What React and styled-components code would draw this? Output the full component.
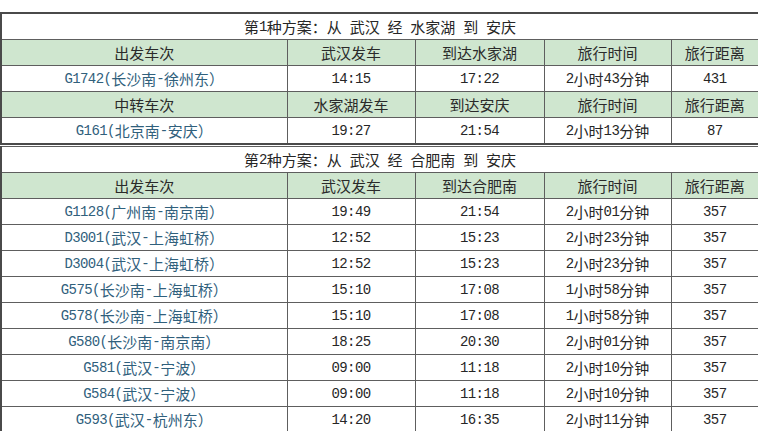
import React from "react";
import styled, { createGlobalStyle } from "styled-components";

const Global = createGlobalStyle`
  html, body { margin: 0; padding: 0; background: #fff; }
  body {
    font-family: "Noto Sans CJK SC", "Liberation Sans", sans-serif;
    overflow: hidden;
  }
`;

const Page = styled.div`
  padding-top: 12px;
  width: 758px;
  display: flex;
  flex-direction: column;
  gap: 0;
`;

const Table = styled.table`
  width: 758px;
  border-collapse: collapse;
  table-layout: fixed;
  border: 2px solid #4a4a4a;
  font-size: 15px;
  color: #262626;
  & + & {
    border-top: 1px solid #4a4a4a;
    margin-top: 1px;
  }
`;

const Row = styled.tr`
  height: 26px;
`;

const Cell = styled.td`
  border: 1px solid #5e5e5e;
  padding: 0;
  height: 25px;
  background: ${(p) => (p.$head ? "#cfe6cf" : "#fff")};
  color: ${(p) => (p.$train ? "#30607c" : p.$head ? "#2a2a2a" : "#262626")};
`;

const Inner = styled.div`
  height: 25px;
  display: flex;
  align-items: center;
  justify-content: center;
  white-space: pre;
  overflow: hidden;
  line-height: 18px;
`;

const Latin = styled.span`
  font-family: "Liberation Mono", monospace;
  font-size: 14px;
  letter-spacing: -0.6px;
  line-height: 18px;
`;

const fmt = (s) =>
  s.split(/([\x20-\x7e]+)/).map((p, i) =>
    /^[\x20-\x7e]+$/.test(p) ? <Latin key={i}>{p}</Latin> : p
  );

const widths = [286, 128, 129, 127, 88];

const plans = [
  {
    title: "第1种方案：从 武汉 经 水家湖 到 安庆",
    groups: [
      {
        head: ["出发车次", "武汉发车", "到达水家湖", "旅行时间", "旅行距离"],
        rows: [["G1742(长沙南-徐州东）", "14:15", "17:22", "2小时43分钟", "431"]],
      },
      {
        head: ["中转车次", "水家湖发车", "到达安庆", "旅行时间", "旅行距离"],
        rows: [["G161(北京南-安庆）", "19:27", "21:54", "2小时13分钟", "87"]],
      },
    ],
  },
  {
    title: "第2种方案：从 武汉 经 合肥南 到 安庆",
    groups: [
      {
        head: ["出发车次", "武汉发车", "到达合肥南", "旅行时间", "旅行距离"],
        rows: [
          ["G1128(广州南-南京南）", "19:49", "21:54", "2小时01分钟", "357"],
          ["D3001(武汉-上海虹桥）", "12:52", "15:23", "2小时23分钟", "357"],
          ["D3004(武汉-上海虹桥）", "12:52", "15:23", "2小时23分钟", "357"],
          ["G575(长沙南-上海虹桥）", "15:10", "17:08", "1小时58分钟", "357"],
          ["G578(长沙南-上海虹桥）", "15:10", "17:08", "1小时58分钟", "357"],
          ["G580(长沙南-南京南）", "18:25", "20:30", "2小时01分钟", "357"],
          ["G581(武汉-宁波）", "09:00", "11:18", "2小时10分钟", "357"],
          ["G584(武汉-宁波）", "09:00", "11:18", "2小时10分钟", "357"],
          ["G593(武汉-杭州东）", "14:20", "16:35", "2小时11分钟", "357"],
        ],
      },
    ],
  },
];

function Plan({ plan }) {
  return (
    <Table>
      <colgroup>
        {widths.map((w, i) => (
          <col key={i} style={{ width: w }} />
        ))}
      </colgroup>
      <tbody>
        <Row>
          <Cell colSpan={5}>
            <Inner>{fmt(plan.title)}</Inner>
          </Cell>
        </Row>
        {plan.groups.map((g, gi) => (
          <React.Fragment key={gi}>
            <Row>
              {g.head.map((h, i) => (
                <Cell key={i} $head>
                  <Inner>{h}</Inner>
                </Cell>
              ))}
            </Row>
            {g.rows.map((r, ri) => (
              <Row key={ri}>
                {r.map((c, ci) => (
                  <Cell key={ci} $train={ci === 0}>
                    <Inner>{fmt(c)}</Inner>
                  </Cell>
                ))}
              </Row>
            ))}
          </React.Fragment>
        ))}
      </tbody>
    </Table>
  );
}

export default function App() {
  return (
    <>
      <Global />
      <Page>
        {plans.map((p, i) => (
          <Plan key={i} plan={p} />
        ))}
      </Page>
    </>
  );
}
